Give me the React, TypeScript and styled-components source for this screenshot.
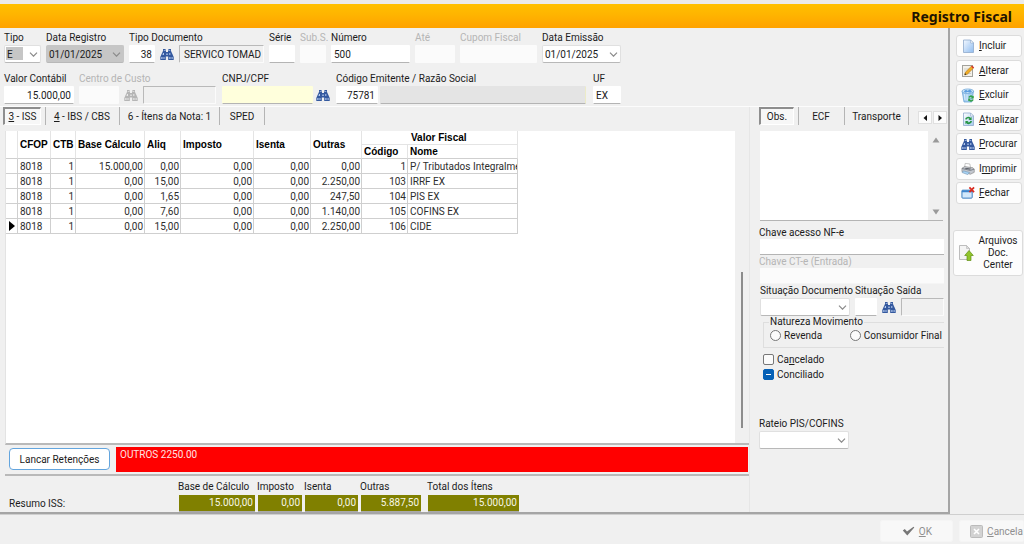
import React from "react";
import styled, { createGlobalStyle, css } from "styled-components";

const GlobalStyle = createGlobalStyle`
  *, *::before, *::after { box-sizing: border-box; }
  body { margin: 0; background: #f0f0f0; }
  body, button, input, select, textarea {
    font-family: Roboto, "Liberation Sans", Arial, sans-serif;
    font-size: 10px;
    line-height: 13px;
    color: #1c1c1c;
  }
  u { text-underline-offset: 1px; }
`;

const Window = styled.div`
  display: flex;
  flex-direction: column;
  min-height: 100vh;
  overflow: hidden;
  background: #f0f0f0;
`;

const TitleBar = styled.header`
  display: flex;
  align-items: center;
  justify-content: flex-end;
  height: 28px;
  padding: 2px 12px 0 0;
  border-top: 4px solid #ebebeb;
  background: linear-gradient(#ffc000, #ffb400 45%, #ffa200);
  h1 {
    margin: 0;
    font: bold 14px/20px "Noto Sans", "Open Sans", sans-serif;
    color: #1f1400;
  }
`;

const Main = styled.div`
  display: flex;
  flex: 1;
`;

const Workspace = styled.main`
  display: flex;
  flex: 1;
  flex-direction: column;
  min-width: 0;
  border-right: 2px solid #a5a5a5;
  border-bottom: 2px solid #a5a5a5;
`;

const Form = styled.form`
  display: flex;
  flex-direction: column;
  gap: 9px;
  padding: 3px 4px 2px;
  border-bottom: 1px solid #fcfcfc;
`;

const FieldRow = styled.div`
  display: flex;
  gap: 5px;
`;

const FieldBox = styled.div<{ $before?: number }>`
  display: flex;
  flex-direction: column;
  gap: 1px;
  margin-left: ${(p) => p.$before ?? 0}px;
`;

const Label = styled.label<{ $muted?: boolean }>`
  width: 0;
  white-space: nowrap;
  color: ${(p) => (p.$muted ? "#b5b5b5" : "#1c1c1c")};
`;

const Controls = styled.div<{ $gap?: number }>`
  display: flex;
  align-items: center;
  gap: ${(p) => p.$gap ?? 5}px;
`;

type Tone = "plain" | "disabled" | "inset" | "yellow" | "gray";

const tones = {
  plain: css`
    background: #fff;
    border-bottom-color: #b4b4b4;
  `,
  disabled: css`
    background: #fbfbfb;
  `,
  inset: css`
    background: #f0f0f0;
    border-color: #b9b9b9 #fbfbfb #fbfbfb #b9b9b9;
  `,
  yellow: css`
    background: #ffffdc;
    border-bottom-color: #b4b4b4;
  `,
  gray: css`
    background: #e4e4e4;
    border-bottom-color: #b4b4b4;
    border-right-color: #ecebc8;
  `,
};

const TextBox = styled.input<{ $width: number; $tone?: Tone; $right?: boolean }>`
  width: ${(p) => p.$width}px;
  height: 18px;
  padding: 0 2px;
  border: 1px solid transparent;
  border-radius: 1px;
  outline: none;
  text-align: ${(p) => (p.$right ? "right" : "left")};
  ${(p) => tones[p.$tone ?? "plain"]}
  ${(p) => p.$tone === "inset" && "padding-left: 4px;"}
`;

const SelectBox = styled.div<{ $width: number; $dark?: boolean }>`
  position: relative;
  width: ${(p) => p.$width}px;
  select {
    display: block;
    width: 100%;
    height: 18px;
    padding: 0 2px;
    border: 1px solid ${(p) => (p.$dark ? "#c6c6c6" : "#e0e0e0")};
    border-bottom-color: #b8b8b8;
    border-radius: 2px;
    outline: none;
    appearance: none;
    background: ${(p) => (p.$dark ? "#c6c6c6" : "#fff")};
  }
  svg {
    position: absolute;
    top: 7px;
    right: 3px;
    pointer-events: none;
  }
`;

const TypeSelect = styled(SelectBox)`
  select {
    background: linear-gradient(#c6c6c6, #c6c6c6) 1px 1px / 17px 13px no-repeat #fff;
  }
`;

const IconButton = styled.button`
  display: flex;
  padding: 0;
  border: 0;
  background: none;
`;

const Body = styled.div`
  display: flex;
  flex: 1;
`;

const Details = styled.section`
  display: flex;
  flex: 1;
  flex-direction: column;
  min-width: 0;
  border-right: 1px solid #e6e6e6;
`;

const SidePanel = styled.aside`
  display: flex;
  flex: 0 0 199px;
  flex-direction: column;
  padding-left: 9px;
  flex-basis: 198px;
`;

const TabBar = styled.div<{ $indent?: number }>`
  display: flex;
  height: 24px;
  padding: 0 0 6px ${(p) => p.$indent ?? 0}px;
`;

const Tab = styled.button<{ $active?: boolean; $width: number }>`
  width: ${(p) => p.$width}px;
  padding: 0;
  border: 0;
  border-right: 1px solid #b4b4b4;
  background: none;
  white-space: nowrap;
  ${(p) =>
    p.$active &&
    css`
      margin-right: 4px;
      border: 1px solid #fff;
      border-top: 2px solid #8e8e8e;
      border-left: 2px solid #8e8e8e;
      background: #f7f7f7;
      box-shadow: 4px 0 0 #f0f0f0, 5px 0 0 #b4b4b4;
    `}
`;

const TabArrows = styled.div`
  display: flex;
  gap: 1px;
  margin: 4px 1px 1px auto;
  button {
    display: flex;
    align-items: center;
    justify-content: center;
    width: 14px;
    padding: 0;
    border: 1px solid #e0e0e0;
    background: #fcfcfc;
  }
`;

const GridPane = styled.div`
  display: flex;
  flex: 1;
  margin-left: 5px;
  border-left: 1px solid #e3e3e3;
  border-bottom: 2px solid #b9b9b9;
`;

const GridArea = styled.div`
  flex: 1;
  background: #fff;
`;

const ScrollTrack = styled.div`
  display: flex;
  flex-direction: column;
  align-items: flex-end;
  width: 14px;
  padding: 141px 6px 15px 0;
  div {
    flex: 1;
    width: 2px;
    background: #8c8c8c;
  }
`;

const Table = styled.table`
  width: 512px;
  table-layout: fixed;
  border-collapse: separate;
  border-spacing: 0;
  line-height: 12px;
  th, td {
    height: 15px;
    padding: 1px 1px 0 2px;
    overflow: hidden;
    border-right: 1px solid #cfcfcf;
    border-bottom: 1px solid #cfcfcf;
    white-space: nowrap;
    text-align: left;
  }
  th {
    height: 14px;
    font-family: "Liberation Sans", Arial, sans-serif;
    color: #000;
  }
  thead th { border-right-color: #e4e4e4; }
  td { color: #2d2d2d; }
`;

const NumberCell = styled.td`
  && { text-align: right; }
`;

const GroupHeader = styled.th`
  && { padding-left: 49px; border-bottom-color: #e4e4e4; }
`;

const Marker = styled.td`
  && { padding: 0 0 0 3px; }
  svg { display: block; }
`;

const Notice = styled.div`
  display: flex;
  align-items: stretch;
  gap: 6px;
  height: 31px;
  margin-left: 5px;
  padding: 2px 1px 2px 4px;
  border-bottom: 2px solid #b9b9b9;
`;

const RetentionButton = styled.button`
  width: 101px;
  height: 22px;
  margin-top: 1px;
  padding: 0;
  border: 1px solid #63a5de;
  border-radius: 4px;
  background: #fff;
`;

const Alert = styled.output`
  flex: 1;
  padding: 1px 4px;
  background: #ff0000;
  color: #ffe3e3;
`;

const Summary = styled.div`
  display: flex;
  align-items: flex-end;
  height: 36px;
  padding-left: 9px;
  gap: 3px;
`;

const SummaryTitle = styled.span`
  width: 167px;
  padding-bottom: 2px;
`;

const SummaryItem = styled.div<{ $width: number; $before?: number }>`
  display: flex;
  flex-direction: column;
  gap: 2px;
  width: ${(p) => p.$width}px;
  margin-left: ${(p) => p.$before ?? 0}px;
  label { margin-left: -1px; white-space: nowrap; }
  output {
    height: 17px;
    padding: 1px 2px 0;
    border-bottom: 1px solid #a9a9a9;
    background: #808000;
    color: #f7f7e6;
    text-align: right;
  }
`;

const Memo = styled.div`
  display: flex;
  height: 90px;
  margin: 0 5px 5px 1px;
  border-bottom: 1px solid #b4b4b4;
  textarea {
    flex: 1;
    min-width: 0;
    border: 0;
    outline: none;
    resize: none;
    overflow: hidden;
    background: #fff;
  }
`;

const MemoScroll = styled.div`
  display: flex;
  flex-direction: column;
  justify-content: space-between;
  align-items: center;
  width: 15px;
  padding: 5px 0 4px;
`;

const SideForm = styled.form`
  display: flex;
  flex-direction: column;
  padding-right: 4px;
`;

const WideInput = styled.input`
  height: 16px;
  margin-left: 1px;
  border: 0;
  border-bottom: 1px solid #b4b4b4;
  outline: none;
  background: #fff;
  &:disabled { border-bottom-color: #f5f5f5; background: #fbfbfb; }
`;

const SideRow = styled.div`
  display: flex;
  gap: 5px;
  margin-left: 1px;
`;

const Nature = styled.fieldset`
  display: flex;
  justify-content: space-between;
  margin: 0 0 0 4px;
  padding: 1px 2px 5px 6px;
  border: 1px solid #dedede;
  border-right: 0;
  legend { margin-left: -1px; padding: 0 1px; line-height: 12px; }
`;

const Option = styled.label`
  display: flex;
  align-items: center;
  gap: 3px;
  white-space: nowrap;
  input {
    appearance: none;
    flex: none;
    width: 11px;
    height: 11px;
    margin: 0;
    border: 1px solid #777;
    background: #fbfbfb;
  }
  input[type="radio"] { border-radius: 50%; }
  input[type="checkbox"] { border-radius: 2px; }
  input.mixed {
    border-color: #0560b6;
    background: linear-gradient(#fff, #fff) center / 5px 1px no-repeat #0560b6;
  }
`;

const Checks = styled.div`
  display: flex;
  flex-direction: column;
  gap: 2px;
  margin: 5px 0 36px 4px;
`;

const Toolbar = styled.nav`
  display: flex;
  flex: 0 0 74px;
  flex-direction: column;
  gap: 26px;
  padding: 7px 1px 0 3px;
`;

const ToolList = styled.div`
  display: flex;
  flex-direction: column;
  justify-content: space-between;
  height: 169px;
  margin: 0 1px 0 3px;
`;

const ToolButton = styled.button<{ $large?: boolean }>`
  display: flex;
  align-items: center;
  gap: ${(p) => (p.$large ? 0 : 4)}px;
  height: ${(p) => (p.$large ? 46 : 22)}px;
  padding: 0 0 0 4px;
  border: 1px solid #dcdcdc;
  border-radius: 3px;
  background: #fdfdfd;
  line-height: 12px;
  white-space: nowrap;
  svg { flex: none; }
  span { flex: ${(p) => (p.$large ? 1 : "none")}; }
`;

const Footer = styled.footer`
  display: flex;
  justify-content: flex-end;
  gap: 6px;
  height: 30px;
  padding: 5px 0 2px;
  border-top: 1px solid #cfcfcf;
`;

const FooterButton = styled.button<{ $width: number }>`
  display: flex;
  align-items: center;
  justify-content: flex-end;
  gap: 4px;
  width: ${(p) => p.$width}px;
  padding: 0;
  border: 1px solid #f5f5f5;
  border-radius: 2px;
  background: #f8f8f8;
  color: #8f8f8f;
`;

const OkButton = styled(FooterButton)`
  padding-right: 20px;
`;

const Chevron = () => (
  <svg width="9" height="5" viewBox="0 0 9 5" fill="none" stroke="#8a8a8a" strokeWidth="1.2">
    <path d="M1 .7 4.5 4.2 8 .7" />
  </svg>
);

const Binoculars = ({ muted }: { muted?: boolean }) => {
  const dark = muted ? "#b5b5b5" : "#34599f";
  const light = muted ? "#e9e9e9" : "#b5caed";
  return (
    <svg width="14" height="14" viewBox="0 0 14 14">
      <path
        fill={dark}
        d="M3 2h2.6v2H6v1h2V4h.4V2H11v2l1.4 3 1.3 3v3H8.2V9.4H5.8V13H.3v-3l1.3-3L3 4z"
      />
      <path
        fill={light}
        d="M3.8 3h.9v1h-.9zM9.3 3h.9v1h-.9zM3 6h1v2H2.5zM9.3 6h1v2h-1zM1.3 10h1.2v2H1.3zM3.5 10h1v2h-1zM9.3 10h1.2v2H9.3zM11.6 10h1v2h-1zM6.3 6.5h1.4v1.4H6.3z"
      />
    </svg>
  );
};

const PageShape = ({ from, to, id }: { from: string; to: string; id: string }) => (
  <>
    <defs>
      <linearGradient id={id} x1="0" y1="0" x2="1" y2="1">
        <stop offset="0" stopColor={from} />
        <stop offset="1" stopColor={to} />
      </linearGradient>
    </defs>
    <path d="M2.5 1h7l3 3v9.5h-10z" fill={`url(#${id})`} stroke="#8fa9cb" strokeWidth=".8" />
    <path d="M9.5 1v3h3z" fill="#fff" stroke="#8fa9cb" strokeWidth=".6" />
  </>
);

const NewIcon = () => (
  <svg width="14" height="15" viewBox="0 0 14 15">
    <PageShape id="new" from="#f4f9ff" to="#8fbcf0" />
  </svg>
);

const EditIcon = () => (
  <svg width="14" height="14" viewBox="0 0 14 14">
    <rect x="1.5" y="1.5" width="10" height="11" fill="#f3f1ea" stroke="#a3a29c" />
    <path d="M3 5h5M3 7h4M3 9.5h7" stroke="#c3c1ba" strokeWidth=".7" />
    <path d="M3.6 11 4.4 8.2 10.6 2l2 2-6.2 6.2z" fill="#f0ac25" stroke="#a16b14" strokeWidth=".5" />
    <path d="m10 2.6 1.2-1.2 2 2L12 4.6z" fill="#d43a32" />
    <path d="m3.6 11 .5-1.7 1.2 1.2z" fill="#222" />
  </svg>
);

const BinIcon = () => (
  <svg width="14" height="15" viewBox="0 0 14 15">
    <path d="M1.2 3.4h11.2L10.8 14H3z" fill="#a8cff0" stroke="#5d9bd3" strokeWidth=".7" />
    <ellipse cx="6.8" cy="3.2" rx="5.8" ry="2.2" fill="#daeefb" stroke="#5d9bd3" strokeWidth=".7" />
    <path d="M2.6 3.2 5 1.8l1.6 1 2.2-1.2 2.4 1.7-2 1.4-2.6-.8-2 .8z" fill="#5c9ee0" />
    <path d="M3.4 6 4 12M6 6.4l.2 6" stroke="#e6f4ff" strokeWidth=".8" />
    <path d="M7.2 9.3a2.8 2.8 0 0 1 4.8-1l.8-.7v3h-3l1-1a1.5 1.5 0 0 0-2.2.2zM12.8 11.4a2.8 2.8 0 0 1-4.8 1.3l-.8.6v-2.7h2.6l-.8 1a1.5 1.5 0 0 0 2.3-.2z" fill="#34a248" />
  </svg>
);

const RefreshIcon = () => (
  <svg width="14" height="15" viewBox="0 0 14 15">
    <PageShape id="refresh" from="#fff" to="#a6caef" />
    <path d="M4 7.3a3.4 3.4 0 0 1 5.7-1.5l.9-.9v3.2H7.4l1.1-1.1a1.8 1.8 0 0 0-2.8.6zM11 8.9a3.4 3.4 0 0 1-5.7 2.3l-.9.9V8.9h3.2L6.5 10a1.8 1.8 0 0 0 2.8-1z" fill="#279544" />
  </svg>
);

const PrinterIcon = () => (
  <svg width="14" height="14" viewBox="0 0 15 14">
    <path d="m4.5 1 5 .6.8 4.4-6.4-.8z" fill="#fff" stroke="#999" strokeWidth=".6" />
    <path d="m1 6.2 3-1.8 8.8 1.3 1.4 1.5v3.4L10 12.6 1 9.8z" fill="#c4c8cf" stroke="#777" strokeWidth=".6" />
    <path d="m1.3 6.5 8.7 2 4-1.3" fill="none" stroke="#6c727c" strokeWidth=".9" />
    <path d="m2.6 9 6.6 1.8-2 2.2-6-2.2z" fill="#a8d4f5" stroke="#6d8dac" strokeWidth=".6" />
    <path d="m5 5.8 6 1-1.3.7-5.7-1z" fill="#41454c" />
  </svg>
);

const CloseIcon = () => (
  <svg width="14" height="14" viewBox="0 0 15 14">
    <rect x="1" y="4" width="11" height="8.5" rx=".8" fill="#d2e8fb" stroke="#2e75bb" />
    <path d="M1 4.2h11v2H1z" fill="#3c85cd" />
    <path d="m9 1 5 5M14 1 9 6" stroke="#d92b20" strokeWidth="1.9" />
  </svg>
);

const UploadIcon = () => (
  <svg width="16" height="18" viewBox="0 0 16 18">
    <path d="M1.5 1.5h7l3 3v11h-10z" fill="#f4f4f4" stroke="#b5b5b5" strokeWidth=".9" />
    <path d="M8.5 1.5v3h3z" fill="#ddd" stroke="#b5b5b5" strokeWidth=".6" />
    <path d="m11 6.5 4.3 5H13V16.5H9v-5H6.7z" fill="#91c52c" stroke="#628f16" strokeWidth=".7" />
  </svg>
);

const Triangle = ({ dir, size = 8, color = "#111" }: { dir: "left" | "right" | "up" | "down"; size?: number; color?: string }) => {
  const paths = {
    left: "M6 1v6L2.5 4z",
    right: "M2.5 1v6L6 4z",
    up: "M4 1.5 7.5 6.5h-7z",
    down: "M4 6.5.5 1.5h7z",
  };
  return (
    <svg width={size} height={size} viewBox="0 0 8 8">
      <path d={paths[dir]} fill={color} />
    </svg>
  );
};

interface FieldProps {
  id: string;
  label: string;
  width: number;
  value?: string;
  tone?: Tone;
  right?: boolean;
  before?: number;
  children?: React.ReactNode;
  gap?: number;
}

const Field = ({ id, label, width, value = "", tone = "plain", right, before, children, gap }: FieldProps) => {
  const disabled = tone === "disabled";
  return (
    <FieldBox $before={before}>
      <Label htmlFor={id} $muted={disabled}>{label}</Label>
      <Controls $gap={gap}>
        <TextBox id={id} $width={width} $tone={tone} $right={right} defaultValue={value} disabled={disabled} />
        {children}
      </Controls>
    </FieldBox>
  );
};

const Picker = ({ id, label, width, value = "", dark, before }: { id: string; label: string; width: number; value?: string; dark?: boolean; before?: number }) => (
  <FieldBox $before={before}>
    <Label htmlFor={id}>{label}</Label>
    <SelectBox $width={width} $dark={dark}>
      <select id={id} defaultValue={value}><option>{value}</option></select>
      <Chevron />
    </SelectBox>
  </FieldBox>
);

const columnWidths = [12, 33, 25, 69, 36, 73, 57, 51, 46, 110];

const rows = [
  ["15.000,00", "0,00", "0,00", "1", "P/ Tributados Integralmente"],
  ["0,00", "15,00", "2.250,00", "103", "IRRF EX"],
  ["0,00", "1,65", "247,50", "104", "PIS EX"],
  ["0,00", "7,60", "1.140,00", "105", "COFINS EX"],
  ["0,00", "15,00", "2.250,00", "106", "CIDE"],
];

const summary = [
  { id: "base", label: "Base de Cálculo", value: "15.000,00", width: 76 },
  { id: "imposto", label: "Imposto", value: "0,00", width: 44 },
  { id: "isenta", label: "Isenta", value: "0,00", width: 53 },
  { id: "outras", label: "Outras", value: "5.887,50", width: 60 },
  { id: "total", label: "Total dos Ítens", value: "15.000,00", width: 91, before: 4 },
];

const tools = [
  { icon: <NewIcon />, text: <><u>I</u>ncluir</> },
  { icon: <EditIcon />, text: <><u>A</u>lterar</> },
  { icon: <BinIcon />, text: <><u>E</u>xcluir</> },
  { icon: <RefreshIcon />, text: <><u>A</u>tualizar</> },
  { icon: <Binoculars />, text: <><u>P</u>rocurar</> },
  { icon: <PrinterIcon />, text: <>I<u>m</u>primir</> },
  { icon: <CloseIcon />, text: <><u>F</u>echar</> },
];

const HeaderForm = () => (
  <Form>
    <FieldRow>
      <FieldBox>
        <Label htmlFor="tipo">Tipo</Label>
        <TypeSelect $width={37}>
          <select id="tipo"><option>E</option></select>
          <Chevron />
        </TypeSelect>
      </FieldBox>
      <Picker id="registro" label="Data Registro" width={78} value="01/01/2025" dark />
      <Field id="documento" label="Tipo Documento" width={26} value="38" right>
        <IconButton type="button" aria-label="Buscar documento"><Binoculars /></IconButton>
        <TextBox aria-label="Descrição do documento" $width={85} $tone="inset" defaultValue="SERVICO TOMAD" readOnly />
      </Field>
      <Field id="serie" label="Série" width={26} />
      <Field id="sub" label="Sub.S." width={26} tone="disabled" />
      <Field id="numero" label="Número" width={79} value="500" />
      <Field id="ate" label="Até" width={40} tone="disabled" />
      <Field id="cupom" label="Cupom Fiscal" width={77} tone="disabled" />
      <Picker id="emissao" label="Data Emissão" width={79} value="01/01/2025" />
    </FieldRow>
    <FieldRow>
      <Field id="valor" label="Valor Contábil" width={70} value="15.000,00" right />
      <Field id="custo" label="Centro de Custo" width={40} tone="disabled">
        <IconButton type="button" aria-label="Buscar centro de custo"><Binoculars muted /></IconButton>
        <TextBox aria-label="Descrição do centro de custo" $width={73} $tone="inset" readOnly />
      </Field>
      <Field id="cnpj" label="CNPJ/CPF" width={91} tone="yellow" gap={3} before={1}>
        <IconButton type="button" aria-label="Buscar CNPJ"><Binoculars /></IconButton>
      </Field>
      <Field id="emitente" label="Código Emitente / Razão Social" width={42} value="75781" right gap={2} before={1}>
        <TextBox aria-label="Razão social" $width={206} $tone="gray" readOnly />
      </Field>
      <Field id="uf" label="UF" width={28} value="EX" before={2} />
    </FieldRow>
  </Form>
);

const FiscalTable = () => (
  <Table>
    <colgroup>
      {columnWidths.map((width, i) => <col key={i} width={width} />)}
    </colgroup>
    <thead>
      <tr>
        {["", "CFOP", "CTB", "Base Cálculo", "Aliq", "Imposto", "Isenta", "Outras"].map((title) => (
          <th key={title} rowSpan={2}>{title}</th>
        ))}
        <GroupHeader colSpan={2}>Valor Fiscal</GroupHeader>
      </tr>
      <tr><th>Código</th><th>Nome</th></tr>
    </thead>
    <tbody>
      {rows.map(([base, aliq, outras, codigo, nome], i) => (
        <tr key={codigo}>
          <Marker>{i === rows.length - 1 && (
            <svg width="7" height="10" viewBox="0 0 7 10"><path d="M0 0v10l6-5z" /></svg>
          )}</Marker>
          <td>8018</td>
          <NumberCell>1</NumberCell>
          <NumberCell>{base}</NumberCell>
          <NumberCell>{aliq}</NumberCell>
          <NumberCell>0,00</NumberCell>
          <NumberCell>0,00</NumberCell>
          <NumberCell>{outras}</NumberCell>
          <NumberCell>{codigo}</NumberCell>
          <td>{nome}</td>
        </tr>
      ))}
    </tbody>
  </Table>
);

const DetailsPanel = () => (
  <Details>
    <TabBar $indent={3}>
      <Tab $active $width={38}><span><u>3</u> - ISS</span></Tab>
      <Tab $width={75}><u>4</u> - IBS / CBS</Tab>
      <Tab $width={100}>6 - Ítens da Nota: 1</Tab>
      <Tab $width={45}>SPED</Tab>
    </TabBar>
    <GridPane>
      <GridArea><FiscalTable /></GridArea>
      <ScrollTrack><div /></ScrollTrack>
    </GridPane>
    <Notice>
      <RetentionButton>Lancar Retenções</RetentionButton>
      <Alert>OUTROS 2250.00</Alert>
    </Notice>
    <Summary>
      <SummaryTitle>Resumo ISS:</SummaryTitle>
      {summary.map(({ id, label, value, width, before }) => (
        <SummaryItem key={id} $width={width} $before={before}>
          <label htmlFor={id}>{label}</label>
          <output id={id}>{value}</output>
        </SummaryItem>
      ))}
    </Summary>
  </Details>
);

const DocumentPanel = () => (
  <SidePanel>
    <TabBar>
      <Tab $active $width={35}>Obs.</Tab>
      <Tab $width={47}>ECF</Tab>
      <Tab $width={64}>Transporte</Tab>
      <TabArrows>
        <button aria-label="Aba anterior"><Triangle dir="left" /></button>
        <button aria-label="Próxima aba"><Triangle dir="right" /></button>
      </TabArrows>
    </TabBar>
    <Memo>
      <textarea aria-label="Observações" />
      <MemoScroll>
        <Triangle dir="up" color="#9a9a9a" />
        <Triangle dir="down" color="#9a9a9a" />
      </MemoScroll>
    </Memo>
    <SideForm>
      <Label htmlFor="nfe">Chave acesso NF-e</Label>
      <WideInput id="nfe" />
      <Label htmlFor="cte" $muted>Chave CT-e (Entrada)</Label>
      <WideInput id="cte" disabled />
      <SideRow>
        <Picker id="situacao" label="Situação Documento" width={90} />
        <Field id="saida" label="Situação Saída" width={22}>
          <IconButton type="button" aria-label="Buscar situação"><Binoculars /></IconButton>
          <TextBox aria-label="Descrição da situação" $width={43} $tone="inset" readOnly />
        </Field>
      </SideRow>
      <Nature>
        <legend>Natureza Movimento</legend>
        <Option><input type="radio" name="natureza" />Revenda</Option>
        <Option><input type="radio" name="natureza" />Consumidor Final</Option>
      </Nature>
      <Checks>
        <Option><input type="checkbox" /><span>Ca<u>n</u>celado</span></Option>
        <Option><input type="checkbox" className="mixed" />Conciliado</Option>
      </Checks>
      <Picker id="rateio" label="Rateio PIS/COFINS" width={90} />
    </SideForm>
  </SidePanel>
);

export default function App() {
  return (
    <Window>
      <GlobalStyle />
      <TitleBar><h1>Registro Fiscal</h1></TitleBar>
      <Main>
        <Workspace>
          <HeaderForm />
          <Body>
            <DetailsPanel />
            <DocumentPanel />
          </Body>
        </Workspace>
        <Toolbar>
          <ToolList>
            {tools.map(({ icon, text }, i) => (
              <ToolButton key={i}>{icon}<span>{text}</span></ToolButton>
            ))}
          </ToolList>
          <ToolButton $large><UploadIcon /><span>Arquivos<br />Doc.<br />Center</span></ToolButton>
        </Toolbar>
      </Main>
      <Footer>
        <OkButton $width={73} disabled>
          <svg width="13" height="10" viewBox="0 0 13 10"><path d="m.8 4.6 2-1.5L5 5.6 11.5.7l.8.8L5.3 9.5z" fill="#777" /></svg>
          <span><u>O</u>K</span>
        </OkButton>
        <FooterButton $width={65} disabled>
          <svg width="13" height="13" viewBox="0 0 13 13">
            <rect x=".5" y=".5" width="12" height="12" rx="1" fill="#d2d2d2" stroke="#bbb" />
            <path d="m4 4 5 5M9 4 4 9" stroke="#fff" strokeWidth="1.6" />
          </svg>
          <span><u>C</u>ancela</span>
        </FooterButton>
      </Footer>
    </Window>
  );
}
